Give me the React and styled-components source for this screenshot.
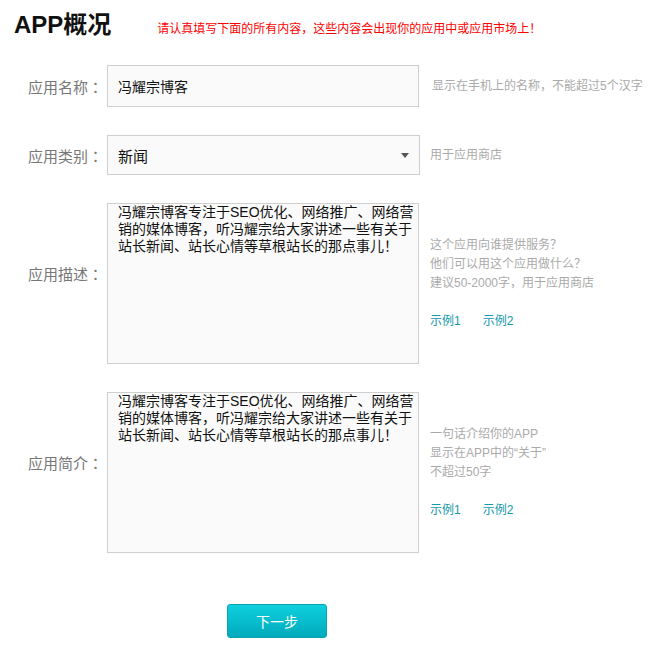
import React from 'react'
import styled, { createGlobalStyle } from 'styled-components'

const GlobalStyle = createGlobalStyle`
  body {
    margin: 0;
    background: #fff;
    font-family: 'Liberation Sans', 'Noto Sans CJK SC', sans-serif;
  }
`

const Page = styled.div`
  width: 650px;
  height: 652px;
  overflow: hidden;
`

const Header = styled.div`
  display: flex;
  align-items: baseline;
  height: 65px;
  box-sizing: border-box;
  padding: 9px 0 0 14px;
`

const Title = styled.h1`
  margin: 0 46px 0 0;
  font-size: 24px;
  line-height: 32px;
  font-weight: bold;
  color: #111;
`

const Notice = styled.span`
  font-size: 12px;
  color: #f00;
`

const Form = styled.div`
  display: grid;
  grid-template-columns: 107px 313px 1fr;
  row-gap: 28px;
`

const Label = styled.label`
  align-self: center;
  justify-self: end;
  padding-right: 4px;
  margin-bottom: ${p => (p.$raised ? '20px' : '0')};
  font-size: 15px;
  color: #777;
`

const Colon = styled.span`
  font-family: 'Noto Sans CJK TC', sans-serif;
`

const Field = styled.div`
  box-sizing: border-box;
  width: ${p => (p.$wide ? '313px' : '312px')};
  height: ${p => p.$h}px;
  border: 1px solid #cfcfcf;
  background: #fafafa;
  padding: 0 10px;
  font-size: ${p => (p.$big ? '15px' : '14px')};
  color: #111;
  display: flex;
  align-items: center;
  justify-content: space-between;
`

const Arrow = styled.span`
  width: 0;
  height: 0;
  border-left: 4px solid transparent;
  border-right: 4px solid transparent;
  border-top: 5px solid #555;
`

const TextBox = styled.div`
  box-sizing: border-box;
  width: 312px;
  height: 161px;
  border: 1px solid #cfcfcf;
  background: #fafafa;
  padding: 0 4px 0 10px;
  font-size: 14px;
  line-height: 17px;
  color: #111;
`

const Squiggle = styled.span`
  text-decoration-line: underline;
  text-decoration-style: wavy;
  text-decoration-color: #f22;
  text-decoration-thickness: 1px;
  text-underline-offset: -1px;
`

const Hint = styled.div`
  align-self: center;
  padding-left: ${p => (p.$tight ? '10px' : '12px')};
  font-size: 12px;
  line-height: 19px;
  color: #aaa;
`

const Links = styled.div`
  display: flex;
  gap: 22px;
  margin-top: 19px;
`

const Link = styled.a`
  color: #1199aa;
  text-decoration: none;
  font-size: 12px;
`

const Button = styled.button`
  margin: 51px 0 0 227px;
  width: 100px;
  height: 34px;
  border: 1px solid #0aa3b2;
  border-radius: 3px;
  background: linear-gradient(#0fd0de, #00aabb);
  color: #fff;
  font-family: inherit;
  font-size: 14px;
  cursor: pointer;
`

const FieldLabel = ({ text, raised }) => (
  <Label $raised={raised}>
    {text}
    <Colon>：</Colon>
  </Label>
)

const Desc = () => (
  <TextBox>
    冯耀宗博客专注于<Squiggle>SEO</Squiggle>优化、网络推广、网络营销的媒体博客，听冯耀宗给大家讲述一些有关于站长新闻、站长心情等草根站长的那点事儿！
  </TextBox>
)

const App = () => (
  <Page>
    <GlobalStyle />
    <Header>
      <Title>APP概况</Title>
      <Notice>请认真填写下面的所有内容，这些内容会出现你的应用中或应用市场上！</Notice>
    </Header>
    <Form>
      <FieldLabel text="应用名称" />
      <Field $h={42}>冯耀宗博客</Field>
      <Hint>显示在手机上的名称，不能超过5个汉字</Hint>

      <FieldLabel text="应用类别" />
      <Field $h={40} $wide $big>
        新闻
        <Arrow />
      </Field>
      <Hint $tight>用于应用商店</Hint>

      <FieldLabel text="应用描述" raised />
      <Desc />
      <Hint $tight>
        这个应用向谁提供服务？<br />
        他们可以用这个应用做什么？<br />
        建议50-2000字，用于应用商店
        <Links>
          <Link href="#">示例1</Link>
          <Link href="#">示例2</Link>
        </Links>
      </Hint>

      <FieldLabel text="应用简介" raised />
      <Desc />
      <Hint $tight>
        一句话介绍你的APP<br />
        显示在APP中的“关于”<br />
        不超过50字
        <Links>
          <Link href="#">示例1</Link>
          <Link href="#">示例2</Link>
        </Links>
      </Hint>
    </Form>
    <Button>下一步</Button>
  </Page>
)

export default App
